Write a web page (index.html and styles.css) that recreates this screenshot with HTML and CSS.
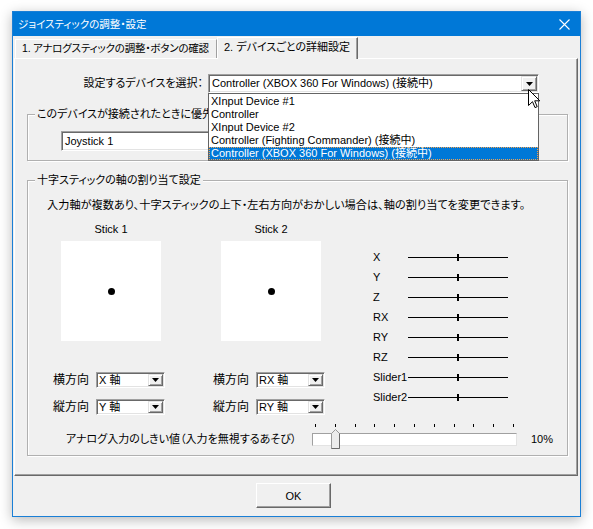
FILE: index.html
```html
<!DOCTYPE html>
<html lang="ja">
<head>
<meta charset="utf-8">
<title>ジョイスティックの調整・設定</title>
<link rel="stylesheet" href="styles.css">
</head>
<body>
<div class="window">
  <div class="titlebar">
    <span class="title">ジョイスティックの調整・設定</span>
    <svg class="close" width="11" height="11" viewBox="0 0 11 11"><path d="M0.5 0.5L10.5 10.5M10.5 0.5L0.5 10.5" stroke="#fff" stroke-width="1.1" fill="none"/></svg>
  </div>
  <div class="tabs">
    <div class="tab">1. アナログスティックの調整・ボタンの確認</div>
    <div class="tab active">2. デバイスごとの詳細設定</div>
  </div>
  <div class="panel">
    <div class="device-row">
      <span class="device-label">設定するデバイスを選択：</span>
      <div class="combo combo-device">
        <span class="combo-text">Controller (XBOX 360 For Windows) (接続中)</span>
        <span class="dd-btn"><svg width="7" height="4" viewBox="0 0 7 4"><path d="M0 0H7L3.5 4Z" fill="#000"/></svg></span>
        <ul class="droplist">
          <li>XInput Device #1</li>
          <li>Controller</li>
          <li>XInput Device #2</li>
          <li>Controller (Fighting Commander) (接続中)</li>
          <li class="selected">Controller (XBOX 360 For Windows) (接続中)</li>
        </ul>
        <svg class="cursor" width="13" height="20" viewBox="0 0 13 20"><path d="M0.5 0.5V16.5L4.5 12.7L7 18.6L9.2 17.7L6.7 11.8H11.8Z" fill="#fff" stroke="#000" stroke-width="1" stroke-linejoin="miter"/></svg>
      </div>
    </div>

    <fieldset class="group group-priority">
      <legend>このデバイスが接続されたときに優先的に割り当てる番号</legend>
      <div class="textbox">Joystick 1</div>
    </fieldset>

    <fieldset class="group group-axes">
      <legend>十字スティックの軸の割り当て設定</legend>
      <p class="desc">入力軸が複数あり、十字スティックの上下・左右方向がおかしい場合は、軸の割り当てを変更できます。</p>
      <div class="axes-main">
        <div class="sticks-area">
          <div class="sticks">
            <div class="stick">
              <div class="stick-name">Stick 1</div>
              <div class="stick-pad"><span class="dot"></span></div>
            </div>
            <div class="stick">
              <div class="stick-name">Stick 2</div>
              <div class="stick-pad"><span class="dot"></span></div>
            </div>
          </div>
          <div class="assign-row first">
            <div class="assign">
              <span class="assign-label">横方向</span>
              <div class="combo combo-small"><span class="combo-text">X 軸</span><span class="dd-btn"><svg width="7" height="4" viewBox="0 0 7 4"><path d="M0 0H7L3.5 4Z" fill="#000"/></svg></span></div>
            </div>
            <div class="assign">
              <span class="assign-label">横方向</span>
              <div class="combo combo-small"><span class="combo-text">RX 軸</span><span class="dd-btn"><svg width="7" height="4" viewBox="0 0 7 4"><path d="M0 0H7L3.5 4Z" fill="#000"/></svg></span></div>
            </div>
          </div>
          <div class="assign-row">
            <div class="assign">
              <span class="assign-label">縦方向</span>
              <div class="combo combo-small"><span class="combo-text">Y 軸</span><span class="dd-btn"><svg width="7" height="4" viewBox="0 0 7 4"><path d="M0 0H7L3.5 4Z" fill="#000"/></svg></span></div>
            </div>
            <div class="assign">
              <span class="assign-label">縦方向</span>
              <div class="combo combo-small"><span class="combo-text">RY 軸</span><span class="dd-btn"><svg width="7" height="4" viewBox="0 0 7 4"><path d="M0 0H7L3.5 4Z" fill="#000"/></svg></span></div>
            </div>
          </div>
        </div>
        <ul class="axis-list">
          <li class="axis"><span class="axis-name">X</span><span class="axis-track"><i class="axis-thumb"></i></span></li>
          <li class="axis"><span class="axis-name">Y</span><span class="axis-track"><i class="axis-thumb"></i></span></li>
          <li class="axis"><span class="axis-name">Z</span><span class="axis-track"><i class="axis-thumb"></i></span></li>
          <li class="axis"><span class="axis-name">RX</span><span class="axis-track"><i class="axis-thumb"></i></span></li>
          <li class="axis"><span class="axis-name">RY</span><span class="axis-track"><i class="axis-thumb"></i></span></li>
          <li class="axis"><span class="axis-name">RZ</span><span class="axis-track"><i class="axis-thumb"></i></span></li>
          <li class="axis"><span class="axis-name">Slider1</span><span class="axis-track"><i class="axis-thumb"></i></span></li>
          <li class="axis"><span class="axis-name">Slider2</span><span class="axis-track"><i class="axis-thumb"></i></span></li>
        </ul>
      </div>
      <div class="threshold">
        <span class="threshold-label">アナログ入力のしきい値（入力を無視するあそび）</span>
        <div class="slider">
          <div class="ticks"><i></i><i></i><i></i><i></i><i></i><i></i><i></i><i></i><i></i><i></i><i></i></div>
          <div class="slider-track">
            <svg class="slider-thumb" width="10" height="20" viewBox="0 0 10 20"><path d="M0.5 19.5V4.5L4.5 0.5L8.5 4.5V19.5Z" fill="#ececec" stroke="#9a9a9a"/><path d="M8.5 4.5V19.5H0.5" fill="none" stroke="#6a6a6a"/></svg>
          </div>
        </div>
        <span class="threshold-value">10%</span>
      </div>
    </fieldset>
  </div>
  <div class="footer"><button class="btn">OK</button></div>
</div>
</body>
</html>
```

FILE: styles.css
```css
* { box-sizing: border-box; }
html, body { margin: 0; }
body {
  width: 593px;
  height: 529px;
  overflow: hidden;
  background: #ffffff;
  padding: 11px 0 0 12px;
  font-family: "Liberation Sans", "Noto Sans CJK JP", sans-serif;
  font-size: 11px;
  color: #000;
  font-feature-settings: "palt";
}
ul { margin: 0; padding: 0; list-style: none; }
p { margin: 0; }

.window {
  width: 569px;
  height: 506px;
  border: 1px solid #1a7fd6;
  background: #f0f0f0;
  box-shadow: 0 3px 12px rgba(0, 0, 0, 0.28);
  display: flex;
  flex-direction: column;
}

.titlebar {
  height: 24px;
  flex: none;
  background: #0078d7;
  color: #fff;
  display: flex;
  align-items: center;
  padding-left: 5px;
}
.title { font-size: 10.5px; line-height: 14px; flex: 1; }
.close { margin-right: 10px; display: block; }

.tabs {
  flex: none;
  height: 21px;
  margin-top: 1px;
  padding-left: 2px;
  display: flex;
  align-items: flex-end;
}
.tab {
  height: 19px;
  line-height: 17px;
  padding-left: 6px;
  font-size: 10.5px;
  letter-spacing: -0.2px;
  border-top: 1px solid #fff;
  border-left: 1px solid #fff;
  border-right: 1px solid #a0a0a0;
  white-space: nowrap;
  width: 202px;
}
.tab.active {
  width: 141px;
  height: 22px;
  line-height: 19px;
  font-size: 11px;
  letter-spacing: 0;
  margin-bottom: -1px;
  position: relative;
  z-index: 2;
  background: #f0f0f0;
  border-right: 1px solid #696969;
  box-shadow: inset -1px 0 #a0a0a0;
}

.panel {
  flex: none;
  height: 418px;
  width: 564px;
  margin-left: 1px;
  padding-top: 15px;
  border: 1px solid;
  border-color: #fff #696969 #696969 #fff;
  box-shadow: inset -1px -1px #a0a0a0;
}

.device-row { display: flex; align-items: center; height: 19px; }
.device-label {
  width: 188px;
  margin-right: 5px;
  text-align: right;
  line-height: 19px;
}

.combo {
  position: relative;
  display: flex;
  align-items: center;
  background: #fff;
  border: 1px solid;
  border-color: #a0a0a0 #fff #fff #a0a0a0;
  box-shadow: inset 1px 1px #696969, inset -1px -1px #e3e3e3;
  font-size: 11px;
}
.combo-text { flex: 1; white-space: nowrap; }
.dd-btn {
  display: flex;
  align-items: center;
  justify-content: center;
  background: #f0f0f0;
  border: 1px solid;
  border-color: #e3e3e3 #696969 #696969 #e3e3e3;
  box-shadow: inset 1px 1px #fff, inset -1px -1px #a0a0a0;
  margin-right: 1px;
}
.dd-btn svg { display: block; }

.combo-device { width: 331px; height: 19px; }
.combo-device .combo-text { padding-left: 3px; line-height: 17px; }
.combo-device .dd-btn { width: 16px; height: 15px; }

.droplist {
  position: absolute;
  z-index: 10;
  left: -1px;
  top: 18px;
  width: 331px;
  background: #fff;
  border: 1px solid #646464;
  padding: 1px 0 0;
  font-size: 11px;
}
.droplist li {
  height: 13px;
  line-height: 13px;
  padding-left: 2px;
  white-space: nowrap;
}
.droplist li.selected {
  background: #0078d7;
  color: #fff;
  outline: 1px dotted #f3a24f;
  outline-offset: -1px;
}
.cursor {
  position: absolute;
  z-index: 11;
  left: 319px;
  top: 14px;
  display: block;
}

.group {
  margin: 0;
  padding: 0;
  min-width: 0;
  width: 541px;
  margin-left: 12px;
  border: 1px solid #b0b0b0;
  box-shadow: inset 1px 1px #fff, 1px 1px #fff;
}
.group legend {
  padding: 0 2px;
  margin-left: 7px;
  font-size: 11px;
  line-height: 12px;
  background: #f0f0f0;
  white-space: nowrap;
}
.group-priority { margin-top: 15px; padding-top: 11px; padding-bottom: 9px; }
.textbox {
  margin-left: 33px;
  width: 459px;
  height: 20px;
  background: #fff;
  border: 1px solid;
  border-color: #a0a0a0 #fff #fff #a0a0a0;
  box-shadow: inset 1px 1px #696969, inset -1px -1px #e3e3e3;
  padding-left: 3px;
  line-height: 18px;
}

.group-axes { margin-top: 13px; padding-top: 13px; padding-bottom: 9px; }
.desc { margin-left: 19px; line-height: 12px; white-space: nowrap; font-size: 11.2px; }

.axes-main { display: flex; margin-top: 12px; }
.sticks-area { width: 272px; margin-left: 25px; flex: none; }
.sticks { display: flex; gap: 60px; padding-left: 8px; }
.stick { width: 100px; }
.stick-name { text-align: center; line-height: 12px; margin-bottom: 6px; }
.stick-pad {
  width: 100px;
  height: 100px;
  background: #fff;
  display: flex;
  align-items: center;
  justify-content: center;
}
.dot { width: 7px; height: 7px; border-radius: 50%; background: #000; display: block; }

.assign-row { display: flex; gap: 48px; margin-top: 11px; }
.assign-row.first { margin-top: 31px; }
.assign { display: flex; align-items: center; gap: 6px; }
.assign-label { width: 37px; font-size: 12px; line-height: 16px; white-space: nowrap; }
.combo-small { width: 69px; height: 16px; }
.combo-small .combo-text { padding-left: 2px; line-height: 14px; }
.combo-small .dd-btn { width: 15px; height: 12px; }

.axis-list { margin-left: 48px; margin-top: 24px; }
.axis { display: flex; align-items: center; height: 20px; }
.axis-name { width: 35px; white-space: nowrap; line-height: 12px; }
.axis-track { position: relative; width: 100px; height: 1px; background: #000; display: block; }
.axis-thumb { position: absolute; left: 49px; top: -3px; width: 2px; height: 7px; background: #000; display: block; }

.threshold { display: flex; align-items: flex-end; margin-left: 38px; margin-top: 9px; }
.threshold-label { width: 246px; line-height: 13px; white-space: nowrap; }
.slider { width: 205px; }
.ticks { display: flex; justify-content: space-between; padding: 0 3px; height: 4px; margin-bottom: 5px; }
.ticks i { width: 1px; height: 3px; background: #000; display: block; }
.slider-track {
  position: relative;
  height: 13px;
  background: #fff;
  border: 1px solid;
  border-color: #a0a0a0 #e3e3e3 #e3e3e3 #a0a0a0;
}
.slider-thumb { position: absolute; left: 18px; top: -5px; display: block; }
.threshold-value { margin-left: 14px; line-height: 13px; }

.footer { flex: 1; padding: 7px 0 0 243px; }
.btn {
  width: 75px;
  height: 25px;
  background: #f0f0f0;
  font-family: inherit;
  font-size: 11px;
  color: #000;
  border: 1px solid;
  border-color: #fff #696969 #696969 #fff;
  box-shadow: inset -1px -1px #a0a0a0;
  padding: 0;
}
```
